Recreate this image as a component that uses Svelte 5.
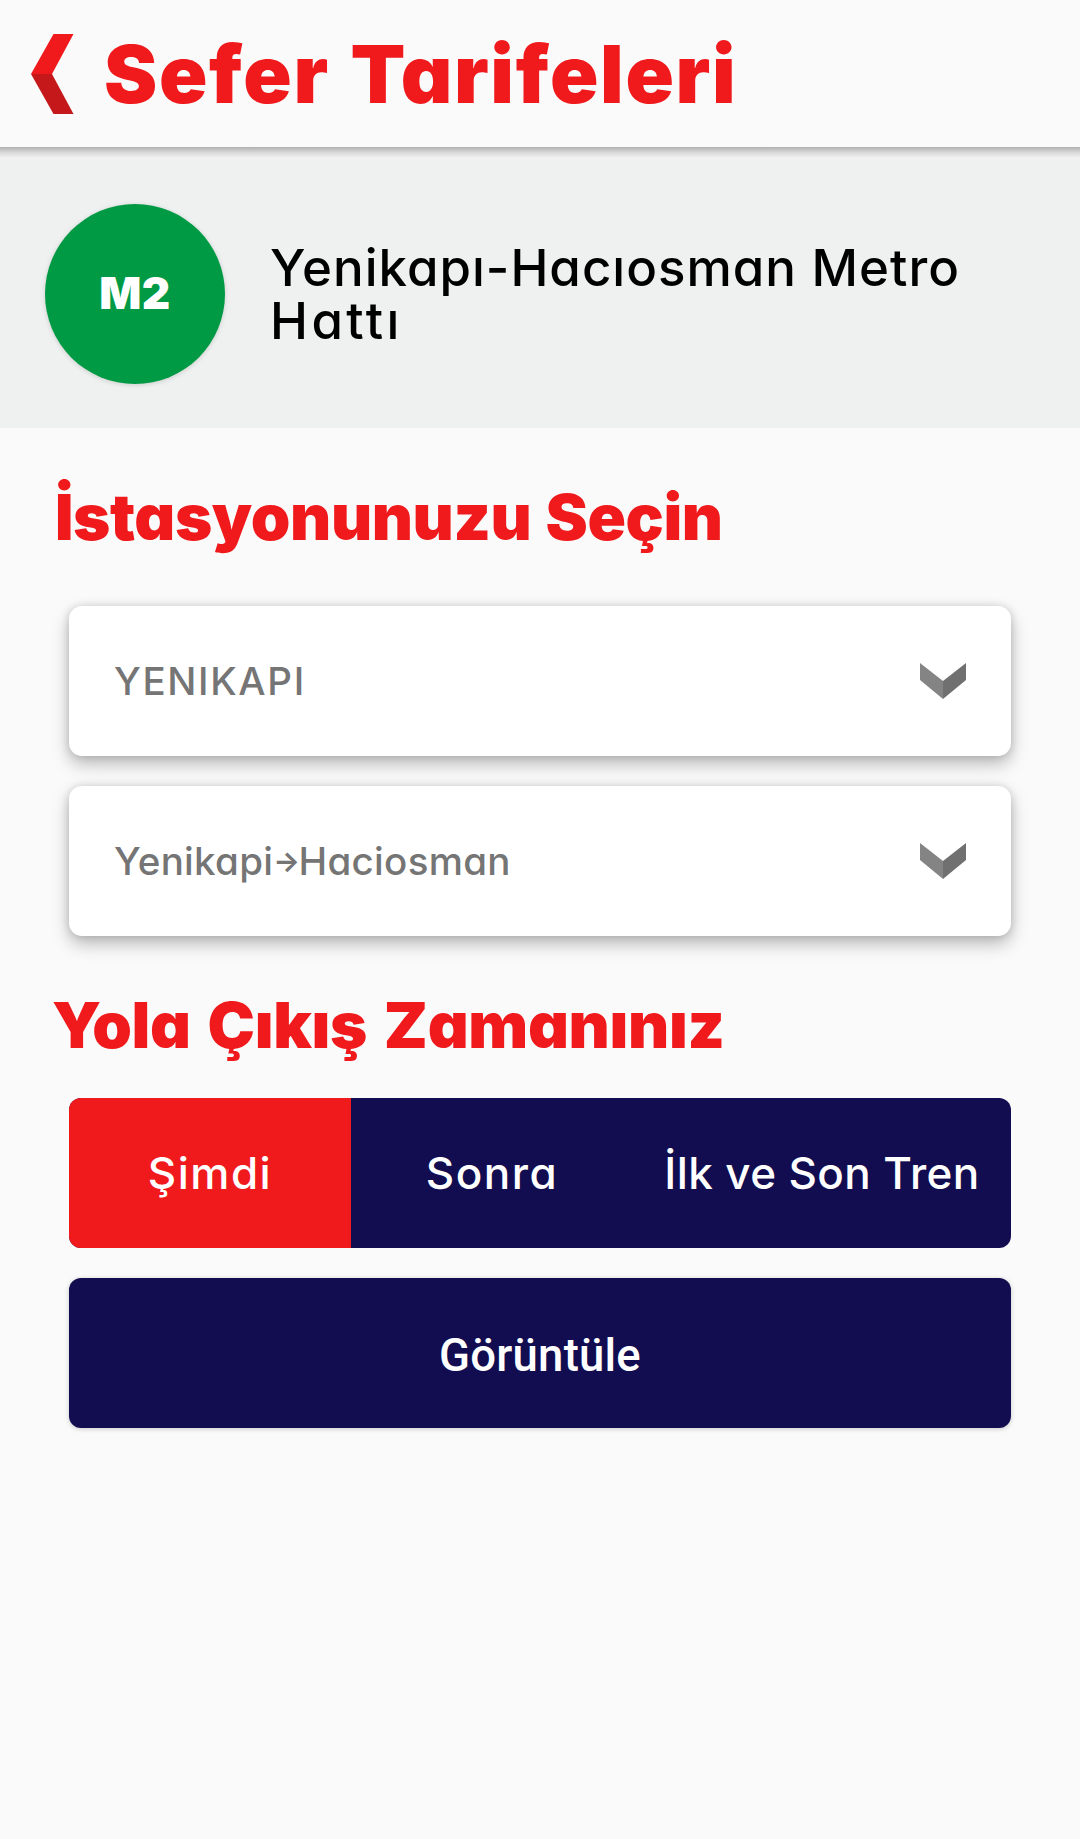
<script lang="ts">
  let departure = $state("now");

  const departures = [
    { id: "now", label: "Şimdi" },
    { id: "later", label: "Sonra" },
    { id: "first-last", label: "İlk ve Son Tren" },
  ];
</script>

{#snippet chevron()}
  <svg width="46" height="36" viewBox="0 0 46 36">
    <path d="M0 0L23 18V36L0 17Z" fill="#848484" />
    <path d="M46 0L23 18V36L46 17Z" fill="#707070" />
  </svg>
{/snippet}

<main class="app">
  <header class="header">
    <button class="back" aria-label="Geri">
      <svg width="44" height="80" viewBox="0 0 44 80">
        <path d="M22.5 0H42.5L21 40H0Z" fill="#f0191c" />
        <path d="M0 40H21L42.5 80H22.5Z" fill="#c5181b" />
      </svg>
    </button>
    <h1>Sefer Tarifeleri</h1>
  </header>
  <div class="header-shadow"></div>

  <section class="line">
    <div class="badge">M2</div>
    <p class="name">
      <span>Yenikapı-Hacıosman Metro</span>
      <span class="name-end">Hattı</span>
    </p>
  </section>

  <section class="form">
    <h2 class="where">İstasyonunuzu Seçin</h2>
    <div class="selects">
      <button class="select">
        <span class="station">YENIKAPI</span>
        {@render chevron()}
      </button>
      <button class="select">
        <span class="direction">Yenikapi<span class="arrow">→</span>Haciosman</span>
        {@render chevron()}
      </button>
    </div>

    <h2 class="when">Yola Çıkış Zamanınız</h2>
    <div class="segments">
      {#each departures as item (item.id)}
        <button
          class="segment {item.id}"
          class:active={departure === item.id}
          onclick={() => (departure = item.id)}
        >
          {item.label}
        </button>
      {/each}
    </div>
    <button class="submit">Görüntüle</button>
  </section>
</main>

<style>
  :global(body) {
    margin: 0;
    background: #fafafa;
  }

  .app {
    min-height: 1839px;
    font-family: Inter, "Open Sans", sans-serif;
    font-feature-settings: "cv11";
    background: #fafafa;
  }

  button {
    margin: 0;
    padding: 0;
    border: none;
    background: none;
    font: inherit;
    font-feature-settings: inherit;
    color: inherit;
    cursor: pointer;
  }

  svg {
    display: block;
  }

  h1,
  h2,
  .name {
    margin: 0;
    white-space: nowrap;
  }

  h1,
  h2 {
    color: #f0191c;
    font-weight: 900;
  }

  .header {
    display: flex;
    align-items: center;
    gap: 29px;
    height: 147px;
    padding: 1px 31px 0;
    box-sizing: border-box;
  }

  h1 {
    font-size: 80px;
    line-height: 96px;
    letter-spacing: 1.65px;
    word-spacing: 3px;
  }

  .header-shadow {
    height: 12px;
    background: linear-gradient(#b0b0b0, #d8d8d8 45%, #f6f6f6);
  }

  .line {
    display: flex;
    align-items: center;
    gap: 45px;
    height: 269px;
    padding: 1px 45px 0;
    box-sizing: border-box;
    background: #eef1f0;
  }

  .badge {
    display: grid;
    place-items: center;
    width: 180px;
    height: 180px;
    padding-bottom: 3px;
    box-sizing: border-box;
    border-radius: 50%;
    background: #009a44;
    box-shadow: 0 1px 5px rgba(0, 0, 0, 0.15);
    color: #ffffff;
    font-size: 44px;
    font-weight: 900;
    letter-spacing: 0.5px;
  }

  .name {
    color: #000000;
    font-size: 51px;
    font-weight: 500;
    line-height: 53px;
    letter-spacing: 1px;
  }

  .name span {
    display: block;
  }

  .name .name-end {
    letter-spacing: 3.4px;
  }

  .form {
    padding: 0 69px;
  }

  h2 {
    font-size: 63.5px;
    line-height: 78px;
  }

  .where {
    margin: 50px 0 0 -14px;
    letter-spacing: -0.4px;
    word-spacing: 2px;
  }

  .when {
    margin: 50px 0 0 -17px;
    letter-spacing: -0.3px;
    word-spacing: 4.5px;
  }

  .selects {
    display: flex;
    flex-direction: column;
    gap: 30px;
    margin-top: 50px;
  }

  .select {
    display: flex;
    align-items: center;
    justify-content: space-between;
    height: 150px;
    padding: 0 45px;
    border-radius: 13px;
    background: #ffffff;
    box-shadow:
      0 8px 17px rgba(0, 0, 0, 0.26),
      0 0 9px rgba(0, 0, 0, 0.14);
    color: #757575;
    font-size: 38.5px;
    font-weight: 500;
  }

  .station {
    letter-spacing: 1.65px;
  }

  .direction {
    letter-spacing: 0.3px;
  }

  .arrow {
    font-size: 28px;
    font-weight: 700;
    letter-spacing: -1.5px;
    vertical-align: 4px;
  }

  .segments {
    display: grid;
    grid-template-columns: 282px 282px 1fr;
    height: 150px;
    margin-top: 34px;
    border-radius: 12px;
    overflow: hidden;
    background: #110d50;
    color: #ffffff;
    font-size: 44px;
    font-weight: 500;
  }

  .segment {
    letter-spacing: 1.5px;
  }

  .first-last {
    letter-spacing: 0.4px;
  }

  .active {
    background: #f0191c;
  }

  .submit {
    display: block;
    width: 100%;
    height: 150px;
    margin-top: 30px;
    padding-top: 4px;
    border-radius: 12px;
    background: #110d50;
    box-shadow: 0 1px 5px rgba(0, 0, 0, 0.2);
    color: #ffffff;
    font-family: Roboto, sans-serif;
    font-size: 45.5px;
    font-weight: 500;
    letter-spacing: 0.2px;
  }
</style>
